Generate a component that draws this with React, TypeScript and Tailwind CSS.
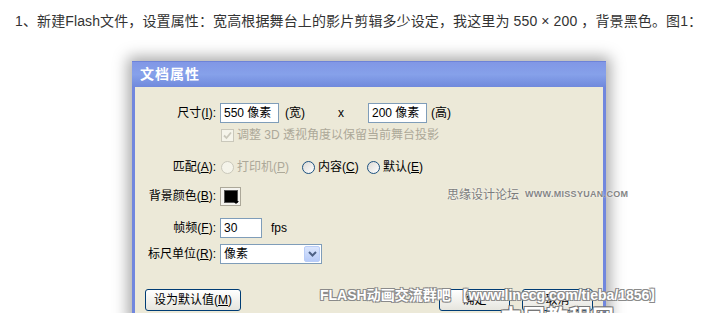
const ui = { fontFamily: '"Liberation Sans", "Noto Sans CJK SC", sans-serif' };

const Mn = ({ k }: { k: string }) => (
  <>
    (<span className="underline underline-offset-1">{k}</span>)
  </>
);

const Label = ({ text, k }: { text: string; k: string }) => (
  <div className="w-[82px] shrink-0 text-right pr-[1px] whitespace-nowrap">
    {text}
    <Mn k={k} />:
  </div>
);

const Radio = ({ disabled }: { disabled?: boolean }) => (
  <span
    className={
      'w-[13px] h-[13px] rounded-full border shrink-0 ' +
      (disabled
        ? 'border-[#cac8bb] bg-[#f5f4ea]'
        : 'border-[#1c5180] bg-gradient-to-br from-[#dcdad5] to-white')
    }
  />
);

const XpButton = ({ w, children }: { w: string; children: React.ReactNode }) => (
  <div
    className={
      w +
      ' h-[22px] shrink-0 rounded-[3px] border border-[#003c74] bg-gradient-to-b from-white to-[#e6e5de] flex items-center justify-center text-[12px] text-black'
    }
  >
    {children}
  </div>
);

export default function App() {
  return (
    <div className="relative w-[706px] h-[313px] overflow-hidden bg-white" style={ui}>
      <p className="pl-[15px] pt-[11px] h-[40px] text-[14px] leading-[20px] tracking-[0.12px] text-[#333] whitespace-nowrap">
        1、新建Flash文件，设置属性：宽高根据舞台上的影片剪辑多少设定，我这里为 550 × 200 ，背景黑色。图1：
      </p>

      <div className="ml-[132px] mt-[21px] w-[474px] shadow-[0_0_14px_4px_rgba(0,0,0,0.35)]">
        {/* title bar */}
        <div className="h-[26px] flex items-center pl-[8px] bg-gradient-to-b from-[#8197e6] via-[#86a1ea] to-[#7089dc] border-t border-[#6d83d8]">
          <span className="text-white font-bold text-[14px] tracking-[1px]">文档属性</span>
        </div>

        <div className="border-x-[3px] border-[#7187de] bg-[#ece9d8] text-[12px] text-black flex flex-col pb-[10px]">
          <div className="mt-[16px] h-[20px] flex items-center">
            <Label text="尺寸" k="I" />
            <div className="ml-[3px] w-[59px] h-[20px] border border-[#7f9db9] bg-white pl-[3px] flex items-center">
              550 像素
            </div>
            <span className="ml-[6px]">(宽)</span>
            <span className="ml-[33px]">x</span>
            <div className="ml-[24px] w-[59px] h-[20px] border border-[#7f9db9] bg-white pl-[3px] flex items-center">
              200 像素
            </div>
            <span className="ml-[4px]">(高)</span>
          </div>

          <div className="mt-[4px] h-[16px] flex items-center pl-[86px] text-[#aca899]">
            <span className="w-[13px] h-[13px] border border-[#cac8bb] bg-[#f5f4ea] flex items-center justify-center">
              <svg width="9" height="9" viewBox="0 0 9 9">
                <path d="M1 4.5 L3.5 7 L8 1.5" fill="none" stroke="#cac8bb" strokeWidth="1.8" />
              </svg>
            </span>
            <span className="ml-[3px]">调整 3D 透视角度以保留当前舞台投影</span>
          </div>

          <div className="mt-[14px] h-[20px] flex items-center">
            <Label text="匹配" k="A" />
            <div className="ml-[4px] w-[81px] flex items-center gap-[3px] text-[#aca899]">
              <Radio disabled />
              <span>
                打印机<Mn k="P" />
              </span>
            </div>
            <div className="w-[65px] flex items-center gap-[3px]">
              <Radio />
              <span>
                内容<Mn k="C" />
              </span>
            </div>
            <div className="flex items-center gap-[3px]">
              <Radio />
              <span>
                默认<Mn k="E" />
              </span>
            </div>
          </div>

          <div className="mt-[9px] h-[20px] flex items-center">
            <Label text="背景颜色" k="B" />
            <div className="ml-[3px] relative w-[21px] h-[19px] border border-[#aca899] bg-[#f4f3ee] flex items-center justify-center">
              <span className="w-[14px] h-[13px] bg-black border border-[#555]" />
              <span className="absolute right-[1px] bottom-[1px] w-0 h-0 border-l-[3px] border-r-[3px] border-t-[3px] border-l-transparent border-r-transparent border-t-black" />
            </div>
          </div>

          <div className="mt-[12px] h-[20px] flex items-center">
            <Label text="帧频" k="F" />
            <div className="ml-[3px] w-[42px] h-[20px] border border-[#7f9db9] bg-white pl-[3px] flex items-center">
              30
            </div>
            <span className="ml-[9px]">fps</span>
          </div>

          <div className="mt-[6px] h-[20px] flex items-center">
            <Label text="标尺单位" k="R" />
            <div className="ml-[3px] w-[102px] h-[20px] border border-[#7f9db9] bg-white pl-[3px] flex items-center justify-between">
              <span>像素</span>
              <span className="w-[16px] h-[16px] mr-[1px] rounded-[2px] border border-[#b9cdf7] bg-gradient-to-b from-[#dbe6fd] to-[#b7cbf8] flex items-center justify-center">
                <svg width="9" height="6" viewBox="0 0 9 6">
                  <path d="M1 1 L4.5 4.5 L8 1" fill="none" stroke="#4d6185" strokeWidth="2" />
                </svg>
              </span>
            </div>
          </div>

          <div className="mt-[25px] flex items-center pl-[10px]">
            <XpButton w="w-[96px]">
              <span>
                设为默认值<Mn k="M" />
              </span>
            </XpButton>
            <div className="flex-1" />
            <XpButton w="w-[71px]">确定</XpButton>
            <div className="w-[12px]" />
            <XpButton w="w-[71px]">取消</XpButton>
            <div className="w-[10px]" />
          </div>
        </div>
      </div>

      {/* watermarks */}
      <div className="absolute left-[447px] top-[186px] flex items-center gap-[6px] whitespace-nowrap">
        <span className="text-[12px] text-[#7c7c7c] [text-shadow:0_0_2px_#fff]">思缘设计论坛</span>
        <span className="text-[9px] font-bold tracking-[0.3px] text-[#858585] [text-shadow:0_0_2px_#fff]">
          WWW.MISSYUAN.COM
        </span>
      </div>
      <div className="absolute left-[320px] top-[285px] text-[14px] font-bold text-white whitespace-nowrap [text-shadow:1px_1px_0_#8a8a8a,-1px_-1px_0_#8a8a8a,1px_-1px_0_#8a8a8a,-1px_1px_0_#8a8a8a]">
        FLASH动画交流群吧 【www.linecg.com/tieba/1856】
      </div>
      <div className="absolute left-[500px] top-[301px] text-[22px] font-bold text-white tracking-[1px] whitespace-nowrap [text-shadow:1px_1px_0_#777,-1px_-1px_0_#777,1px_-1px_0_#777,-1px_1px_0_#777]">
        中国教程网
      </div>
    </div>
  );
}
